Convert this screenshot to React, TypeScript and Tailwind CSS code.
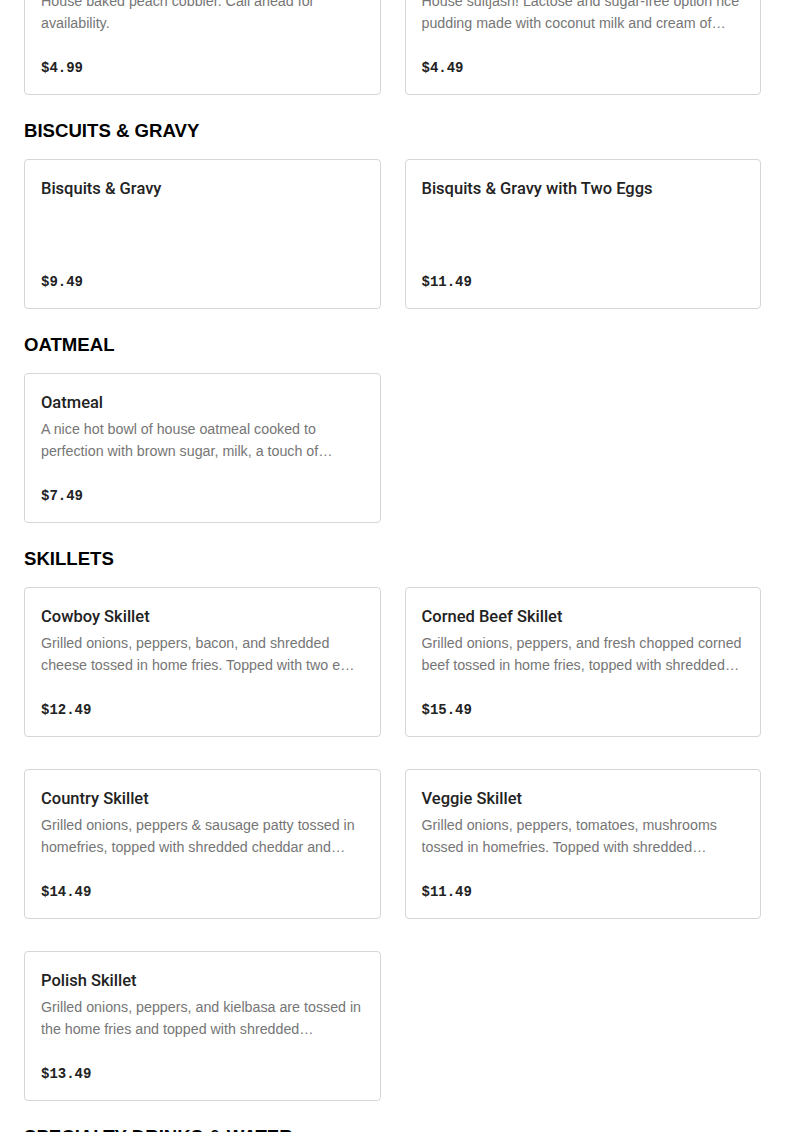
import React from "react";

type Item = { title: string; desc?: string; price: string };

const Card = ({ item }: { item: Item }) => (
  <div className="h-[150px] rounded border border-[#d6d6d6] bg-white px-4 pt-[17px] pb-4 flex flex-col">
    <h3 className="text-[16.5px] leading-6 font-medium text-[#222] font-['Roboto',Arial,sans-serif]">
      {item.title}
    </h3>
    {item.desc && (
      <p className="mt-[3px] text-[14.25px] leading-[22px] text-[#767676] line-clamp-2">{item.desc}</p>
    )}
    <div className="mt-auto font-['Liberation_Mono',monospace] font-bold text-[14px] leading-5 text-[#222]">
      {item.price}
    </div>
  </div>
);

const Grid = ({ items, className = "" }: { items: Item[]; className?: string }) => (
  <div className={`grid grid-cols-2 gap-x-6 gap-y-8 ${className}`}>
    {items.map((it) => (
      <Card key={it.title} item={it} />
    ))}
  </div>
);

const Section = ({ title, items }: { title: string; items: Item[] }) => (
  <section className="mt-6">
    <h2 className="text-[18.6px] leading-6 font-bold text-black uppercase">{title}</h2>
    <Grid items={items} className="mt-4" />
  </section>
);

const desserts: Item[] = [
  { title: "Peach Cobbler", desc: "House baked peach cobbler. Call ahead for availability.", price: "$4.99" },
  {
    title: "Sutlijash",
    desc: "House suitjash! Lactose and sugar-free option rice pudding made with coconut milk and cream of…",
    price: "$4.49",
  },
];

const sections: { title: string; items: Item[] }[] = [
  {
    title: "Biscuits & Gravy",
    items: [
      { title: "Bisquits & Gravy", price: "$9.49" },
      { title: "Bisquits & Gravy with Two Eggs", price: "$11.49" },
    ],
  },
  {
    title: "Oatmeal",
    items: [
      {
        title: "Oatmeal",
        desc: "A nice hot bowl of house oatmeal cooked to perfection with brown sugar, milk, a touch of…",
        price: "$7.49",
      },
    ],
  },
  {
    title: "Skillets",
    items: [
      {
        title: "Cowboy Skillet",
        desc: "Grilled onions, peppers, bacon, and shredded cheese tossed in home fries. Topped with two e…",
        price: "$12.49",
      },
      {
        title: "Corned Beef Skillet",
        desc: "Grilled onions, peppers, and fresh chopped corned beef tossed in home fries, topped with shredded…",
        price: "$15.49",
      },
      {
        title: "Country Skillet",
        desc: "Grilled onions, peppers & sausage patty tossed in homefries, topped with shredded cheddar and…",
        price: "$14.49",
      },
      {
        title: "Veggie Skillet",
        desc: "Grilled onions, peppers, tomatoes, mushrooms tossed in homefries. Topped with shredded…",
        price: "$11.49",
      },
      {
        title: "Polish Skillet",
        desc: "Grilled onions, peppers, and kielbasa are tossed in the home fries and topped with shredded…",
        price: "$13.49",
      },
    ],
  },
  {
    title: "Specialty Drinks & Water",
    items: [
      { title: "Bottled Water", price: "$1.99" },
      { title: "Sparkling Water", price: "$2.49" },
    ],
  },
];

export default function App() {
  return (
    <div className="min-h-screen bg-white overflow-hidden font-['Liberation_Sans',Arial,sans-serif]">
      <div className="flow-root px-6">
        <Grid items={desserts} className="-mt-[55px]" />
        {sections.map((s) => (
          <Section key={s.title} title={s.title} items={s.items} />
        ))}
      </div>
    </div>
  );
}
